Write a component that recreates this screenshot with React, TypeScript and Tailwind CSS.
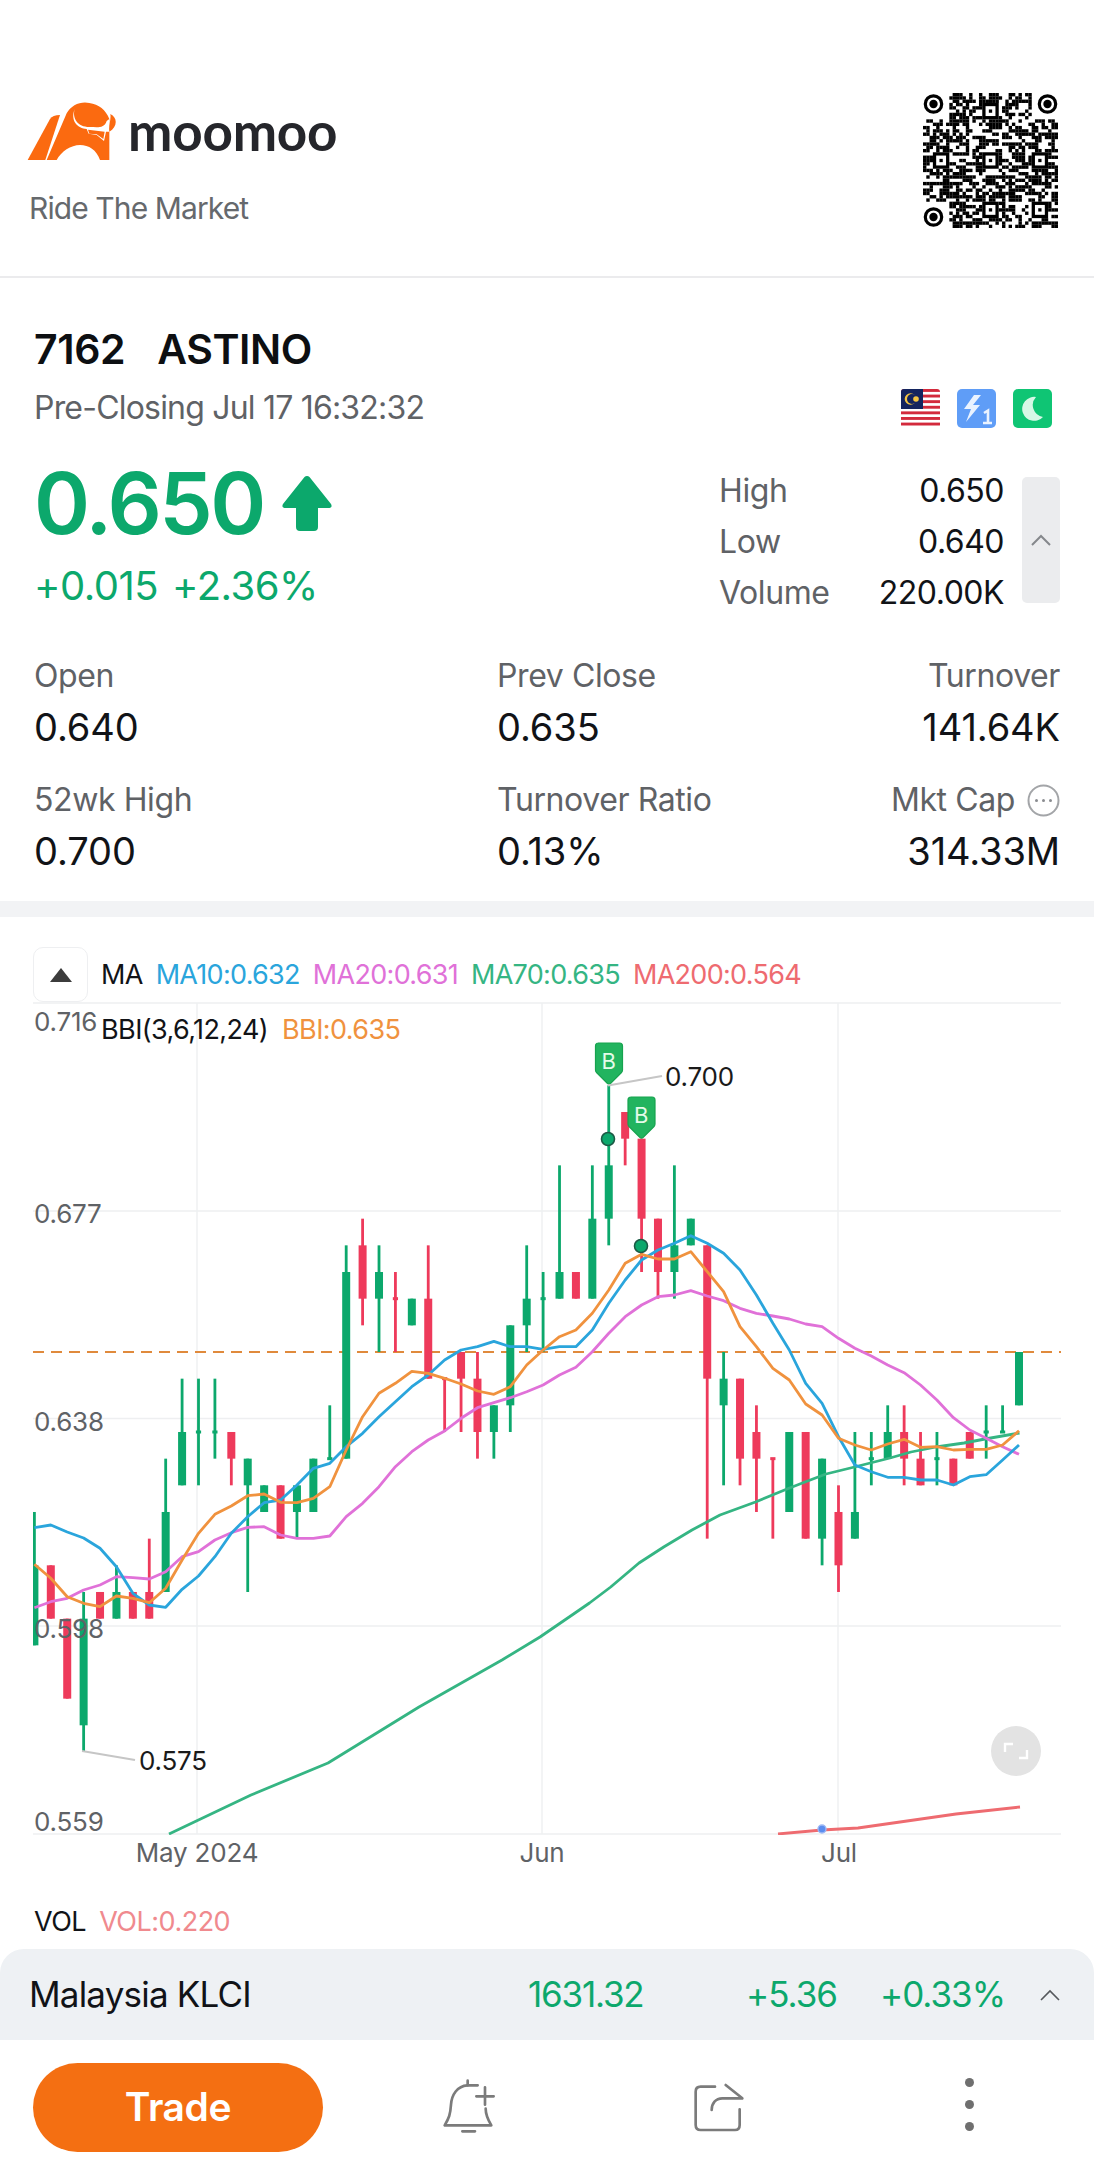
import React from "react";

const GREEN = "#0ca86c";
const RED = "#ee3a5b";
const X = (i: number) => 34.4 + 16.41 * i;
const Y = (p: number) => 1352 + (0.65 - p) * 5333;

// [up?, bodyTop, bodyBottom, wickTop, wickBottom]
const C: [number, number, number, number, number][] = [
  [1,.610,.595,.620,.595],[0,.610,.600,.610,.600],[0,.600,.585,.600,.585],[1,.600,.580,.605,.575],[0,.605,.600,.605,.600],
  [1,.605,.600,.610,.600],[0,.605,.600,.605,.600],[0,.605,.600,.615,.600],[1,.620,.605,.630,.605],[1,.635,.625,.645,.625],
  [1,.635,.635,.645,.625],[1,.635,.635,.645,.630],[0,.635,.630,.635,.625],[1,.630,.625,.630,.605],[1,.625,.620,.625,.620],
  [0,.625,.615,.625,.615],[1,.625,.620,.625,.615],[1,.630,.620,.630,.620],[1,.630,.630,.640,.630],[1,.665,.630,.670,.630],
  [0,.670,.660,.675,.655],[1,.665,.660,.670,.650],[0,.660,.660,.665,.650],[1,.660,.655,.660,.655],[0,.660,.645,.670,.645],
  [0,.645,.645,.645,.635],[0,.650,.645,.650,.635],[0,.645,.635,.650,.630],[1,.640,.635,.640,.630],[1,.655,.640,.655,.635],
  [1,.660,.655,.670,.650],[1,.660,.660,.665,.650],[1,.665,.660,.685,.660],[0,.665,.660,.665,.660],[1,.675,.660,.685,.660],
  [1,.685,.675,.700,.670],[0,.695,.690,.695,.685],[0,.690,.675,.690,.665],[0,.675,.665,.675,.660],[1,.670,.665,.685,.660],
  [1,.675,.670,.675,.670],[0,.670,.645,.670,.615],[1,.645,.640,.650,.625],[0,.645,.630,.645,.625],[0,.635,.630,.640,.620],
  [0,.630,.630,.630,.615],[1,.635,.620,.635,.620],[0,.635,.615,.635,.615],[1,.630,.615,.630,.610],[0,.620,.610,.625,.605],
  [1,.620,.615,.635,.615],[1,.630,.630,.635,.625],[1,.635,.630,.640,.630],[0,.635,.630,.640,.625],[0,.630,.625,.635,.625],
  [1,.630,.630,.635,.625],[0,.630,.625,.630,.625],[0,.635,.630,.635,.630],[1,.635,.635,.640,.630],[1,.635,.635,.640,.635],
  [1,.650,.640,.650,.640],
];

const toPts = (a: number[]) => a.map((z, i) => `${X(i).toFixed(1)},${(1330 + z / 3).toFixed(1)}`).join(" ");

const MA10 = [593,585,606,624,655,710,790,825,832,778,738,680,610,560,518,510,465,415,400,350,310,260,215,170,135,90,60,50,34,50,50,58,50,50,0,-80,-150,-210,-240,-260,-283,-260,-230,-180,-105,-20,60,160,220,320,405,425,442,442,450,450,465,440,434,390,345];
const BBI = [703,745,800,820,830,798,805,818,775,690,610,553,528,497,492,517,518,505,470,360,260,190,160,124,130,145,162,183,193,170,105,60,20,0,-50,-120,-200,-227,-213,-213,-235,-175,-115,-10,50,115,150,222,255,325,345,360,342,328,352,350,360,358,358,345,302];
const MA20 = [833,815,805,780,765,740,743,747,725,680,665,630,608,592,590,615,625,625,618,560,520,470,410,365,330,303,265,233,218,203,185,165,135,112,65,10,-40,-75,-100,-105,-118,-102,-88,-65,-50,-42,-33,-18,-10,25,55,78,105,128,165,210,263,300,325,350,373];
const MA70 = "169,1834 251,1795 328,1763 419,1707 502,1660 540,1637 575,1613 589.5,1603 610.7,1587 639,1563 663.7,1547 692,1530 720,1515 755.5,1502 787,1489 805,1482 826,1474 854.5,1467 890,1458 911,1452 936,1447 964,1443 985,1439 1019.5,1433";
const MA200 = "778,1834 822,1830 858,1828 956,1814 1020,1807";

function Chart() {
  const label = "#5f6266";
  return (
    <svg className="absolute inset-0 w-full h-full" viewBox="0 917 1094 1032" fill="none">
      <defs>
        <clipPath id="plot"><rect x="33" y="1003" width="1028" height="832" /></clipPath>
      </defs>
      {[1003, 1211, 1418.5, 1626, 1834].map((y) => (
        <line key={y} x1="33" x2="1061" y1={y} y2={y} stroke="#eeeff1" strokeWidth="1.6" />
      ))}
      {[197, 542, 838].map((x) => (
        <line key={x} x1={x} x2={x} y1="1003" y2="1834" stroke="#eeeff1" strokeWidth="1.4" />
      ))}
      <line x1="33" x2="1061" y1="1352" y2="1352" stroke="#e08a3c" strokeWidth="2" strokeDasharray="11 7" />
      <g clipPath="url(#plot)">
        {C.map(([up, bt, bb, wt, wb], i) => {
          const col = up ? GREEN : RED;
          const x = X(i);
          const doji = bt === bb;
          return (
            <g key={i} fill={col}>
              <rect x={x - 1.4} y={Y(wt)} width="2.8" height={Y(wb) - Y(wt)} />
              {doji ? (
                <rect x={x - 2.6} y={Y(bt) - 1.5} width="5.2" height="3" />
              ) : (
                <rect x={x - 4} y={Y(bt)} width="8" height={Y(bb) - Y(bt)} />
              )}
            </g>
          );
        })}
        <polyline points={MA200} stroke="#ee6b70" strokeWidth="2.8" strokeLinejoin="round" />
        <polyline points={MA70} stroke="#35b583" strokeWidth="2.8" strokeLinejoin="round" />
        <polyline points={toPts(MA20)} stroke="#e071d8" strokeWidth="2.8" strokeLinejoin="round" />
        <polyline points={toPts(MA10)} stroke="#2aa5dc" strokeWidth="2.8" strokeLinejoin="round" />
        <polyline points={toPts(BBI)} stroke="#f0923e" strokeWidth="2.8" strokeLinejoin="round" />
      </g>
      <circle cx="822" cy="1829" r="4" fill="#5b8def" stroke="#9db8f5" strokeWidth="1.4" />
      {/* markers */}
      <circle cx="608" cy="1139" r="6.5" fill={GREEN} stroke="#1c5a45" strokeWidth="1.6" />
      <circle cx="641" cy="1246" r="6.5" fill={GREEN} stroke="#1c5a45" strokeWidth="1.6" />
      {[[595, 1043], [627.5, 1097]].map(([x, y]) => (
        <g key={x}>
          <path
            d={`M${x + 3} ${y} h21.5 q3 0 3 3 v24 q0 1.5 -1 2.5 l-11 11 q-1.5 1.2 -3 0 l-11 -11 q-1 -1 -1 -2.5 v-24 q0 -3 3 -3z`}
            fill="#22b45f"
            stroke="#17a34f"
            strokeWidth="1.2"
          />
          <text x={x + 13.8} y={y + 25.5} textAnchor="middle" fontSize="22" fill="#e4fbe9" fontFamily="Inter, sans-serif">B</text>
        </g>
      ))}
      <line x1="608" y1="1085.5" x2="662" y2="1076" stroke="#c6c6c6" strokeWidth="2" />
      <text x="665" y="1085.5" fontSize="26" fill="#1a1a1a" fontFamily="Inter, sans-serif" letterSpacing="-0.2">0.700</text>
      <line x1="82" y1="1751" x2="135" y2="1760" stroke="#c6c6c6" strokeWidth="2" />
      <text x="139" y="1769.5" fontSize="26" fill="#1a1a1a" fontFamily="Inter, sans-serif" letterSpacing="-0.2">0.575</text>
      {/* axis labels */}
      {[["0.716", 1031], ["0.677", 1223], ["0.638", 1431], ["0.598", 1638], ["0.559", 1831]].map(([t, y]) => (
        <text key={t} x="34" y={y} fontSize="26" fill={label} fontFamily="Inter, sans-serif" letterSpacing="-0.2">{t}</text>
      ))}
      {[["May 2024", 197], ["Jun", 542], ["Jul", 839]].map(([t, x]) => (
        <text key={t} x={x} y="1862" textAnchor="middle" fontSize="26" fill={label} fontFamily="Inter, sans-serif" letterSpacing="-0.2">{t}</text>
      ))}
      {/* fullscreen */}
      <circle cx="1016" cy="1751" r="25" fill="#e3e3e3" />
      <path d="M1005 1752 v-8 h8 M1027 1750 v8 h-8" stroke="#fff" strokeWidth="2.4" />
    </svg>
  );
}

function Qr() {
  const N = 41;
  const s = 135 / N;
  let seed = 7162;
  const rnd = () => {
    seed = (seed * 1664525 + 1013904223) >>> 0;
    return (seed >>> 16) / 65536;
  };
  const rects: React.ReactNode[] = [];
  const aligns = [[5, 20], [20, 5], [20, 20], [35, 20], [20, 35], [35, 35]];
  const inFinder = (c: number, r: number) => (c < 8 && r < 8) || (c > 32 && r < 8) || (c < 8 && r > 32);
  const inAlign = (c: number, r: number) => aligns.some(([a, b]) => Math.abs(c - a) <= 2 && Math.abs(r - b) <= 2);
  for (let r = 0; r < N; r++) {
    let prev = false;
    for (let c = 0; c < N; c++) {
      const on = rnd() < (prev ? 0.62 : 0.44);
      prev = on;
      if (on && !inFinder(c, r) && !inAlign(c, r)) {
        rects.push(<rect key={`${r}-${c}`} x={c * s} y={r * s} width={s + 0.1} height={s + 0.1} />);
      }
    }
  }
  return (
    <svg className="w-[135px] h-[135px]" viewBox="0 0 135 135" fill="#000">
      {rects}
      {aligns.map(([a, b]) => (
        <g key={`${a}${b}`}>
          <rect x={(a - 2) * s} y={(b - 2) * s} width={5 * s} height={5 * s} />
          <rect x={(a - 1) * s} y={(b - 1) * s} width={3 * s} height={3 * s} fill="#fff" />
          <rect x={a * s} y={b * s} width={s} height={s} />
        </g>
      ))}
      {[[10.5, 11], [124.5, 11], [10.5, 124]].map(([x, y]) => (
        <g key={x * y}>
          <circle cx={x} cy={y} r="8.2" fill="#fff" stroke="#000" strokeWidth="3.2" />
          <circle cx={x} cy={y} r="4.2" />
        </g>
      ))}
    </svg>
  );
}

function Logo() {
  return (
    <svg className="w-[92px] h-[60px]" viewBox="50 55 276 180">
      <path d="M55 235 L122 112 Q130 100 152 100 L108 235 Z" fill="#fb6a10" />
      <path
        d="M112 235 L172 95 C185 70 215 58 240 64 C268 68 290 85 300 112 L300 235 L272 235 C262 205 238 190 212 190 C185 190 155 210 142 235 Z"
        fill="#fb6a10"
      />
      <path
        d="M196 82 C188 110 205 136 240 136 C262 136 285 142 292 118 L300 112 L302 150 L290 150 L284 178 L262 160 L238 156 L232 142 C205 140 182 118 196 82 Z"
        fill="#fff"
      />
      <path d="M236 144 L286 150 L282 172 L262 158 L240 156 Z" fill="#fb6a10" />
      <path d="M303 97 C326 108 324 136 300 150 C297 130 306 115 303 97 Z" fill="#fb6a10" />
    </svg>
  );
}

function Flags() {
  return (
    <div className="flex gap-[17px] mr-[8px]">
      <svg className="w-[39px] h-[39px]" viewBox="0 0 39 39">
        <defs><clipPath id="fl"><rect width="39" height="39" rx="3" /></clipPath></defs>
        <g clipPath="url(#fl)">
          <rect width="39" height="39" fill="#fff" />
          {[0, 5.6, 11.2, 16.8, 22.4, 28, 33.6].map((y) => (
            <rect key={y} y={y} width="39" height="2.9" fill="#d32a3c" />
          ))}
          <rect width="22" height="20" fill="#14245e" />
          <circle cx="9.5" cy="10" r="5.8" fill="#f5c542" />
          <circle cx="11" cy="10" r="5" fill="#14245e" />
          <circle cx="15" cy="10" r="2.8" fill="#f5c542" />
        </g>
      </svg>
      <svg className="w-[39px] h-[39px]" viewBox="0 0 39 39">
        <rect width="39" height="39" rx="5" fill="#5f9df7" />
        <path d="M17 6 L7 20 H14 L9 33 L23 16 H16 L24 6 Z" fill="#eaf3ff" />
        <path d="M27 24 L31 21.5 V34 M26 34 H35" stroke="#eaf3ff" strokeWidth="2.6" fill="none" />
      </svg>
      <svg className="w-[39px] h-[39px]" viewBox="0 0 39 39">
        <rect width="39" height="39" rx="5" fill="#0fc574" />
        <path d="M23 8 A12 12 0 1 0 30 28 A12 12 0 0 1 23 8 Z" fill="#d6f8e6" />
      </svg>
    </div>
  );
}

function Stat({ label, value, right, extra }: { label: string; value: string; right?: boolean; extra?: React.ReactNode }) {
  return (
    <div className={`flex flex-col ${right ? "items-end" : "items-start"}`}>
      <div className="h-[50px] flex items-center gap-[12px] text-[32px] text-[#5f6266] tracking-[-0.4px]">
        {label}
        {extra}
      </div>
      <div className="h-[52px] flex items-center text-[38px] text-[#111317] tracking-[-0.1px]">{value}</div>
    </div>
  );
}

export default function App() {
  return (
    <div className="relative w-[1094px] h-[2176px] overflow-hidden bg-white font-['Inter',sans-serif]">
      {/* brand header */}
      <header className="h-[278px] border-b-2 border-[#ebebed] flex justify-between pl-[26px] pr-[36px]">
        <div className="pt-[100px]">
          <div className="flex items-center h-[60px]">
            <Logo />
            <span className="ml-[10px] text-[53px] leading-none font-bold text-[#25262b] font-['Lato',sans-serif] tracking-[-0.2px]">moomoo</span>
          </div>
          <div className="mt-[32px] ml-[3px] text-[30px] leading-[32px] text-[#66696d] tracking-[-0.9px]">Ride The Market</div>
        </div>
        <div className="pt-[93px]"><Qr /></div>
      </header>

      {/* quote */}
      <section className="h-[623px] px-[34px] pt-[47px]">
        <div className="h-[50px] flex items-center text-[41px] font-semibold text-[#0d0f12] tracking-[-0.4px] gap-[32px]">
          <span>7162</span><span>ASTINO</span>
        </div>
        <div className="mt-[13px] h-[40px] flex items-center justify-between">
          <span className="text-[32px] text-[#5f6266] tracking-[-0.8px]">Pre-Closing Jul 17 16:32:32</span>
          <Flags />
        </div>
        <div className="mt-[37px] flex justify-between">
          <div className="pt-[3px] text-[#0ca86c]">
            <div className="h-[70px] flex items-center">
              <span className="text-[85px] leading-none font-semibold tracking-[-2.5px]">0.650</span>
              <svg className="ml-[18px] w-[50px] h-[55px]" viewBox="0 0 50 55" fill="#0ca86c">
                <path d="M25 0 Q26.5 0 27.5 1 L49 28 Q51 32 46 32 H36 V51 Q36 55 32 55 H18 Q14 55 14 51 V32 H4 Q-1 32 1 28 L22.5 1 Q23.5 0 25 0 Z" />
              </svg>
            </div>
            <div className="mt-[26px] h-[44px] flex items-center text-[40px] tracking-[-0.5px] gap-[14px]">
              <span>+0.015</span><span>+2.36%</span>
            </div>
          </div>
          <div className="flex">
            <div className="w-[285px]">
              {[["High", "0.650"], ["Low", "0.640"], ["Volume", "220.00K"]].map(([a, b]) => (
                <div key={a} className="h-[51px] flex items-center justify-between">
                  <span className="text-[32px] text-[#5f6266] tracking-[-0.4px]">{a}</span>
                  <span className="text-[32px] text-[#111317] tracking-[-0.5px]">{b}</span>
                </div>
              ))}
            </div>
            <div className="ml-[18px] mt-[12px] w-[38px] h-[126px] rounded-[5px] bg-[#ebecee] flex items-center justify-center">
              <svg className="w-[20px] h-[12px]" viewBox="0 0 20 12" fill="none" stroke="#85888c" strokeWidth="2"><path d="M1 11 L10 2 L19 11" /></svg>
            </div>
          </div>
        </div>
        <div className="mt-[33px] grid grid-cols-[463px_1fr_auto] gap-y-[22px]">
          <Stat label="Open" value="0.640" />
          <Stat label="Prev Close" value="0.635" />
          <Stat label="Turnover" value="141.64K" right />
          <Stat label="52wk High" value="0.700" />
          <Stat label="Turnover Ratio" value="0.13%" />
          <Stat
            label="Mkt Cap"
            value="314.33M"
            right
            extra={
              <svg className="w-[33px] h-[33px]" viewBox="0 0 33 33" fill="none">
                <circle cx="16.5" cy="16.5" r="15" stroke="#a3a5a8" strokeWidth="2" />
                <circle cx="9.5" cy="16.5" r="1.5" fill="#8a8c90" /><circle cx="16.5" cy="16.5" r="1.5" fill="#8a8c90" /><circle cx="23.5" cy="16.5" r="1.5" fill="#8a8c90" />
              </svg>
            }
          />
        </div>
      </section>

      <div className="h-[16px] bg-[#f2f3f5]" />

      {/* chart */}
      <section className="relative h-[1032px]">
        <Chart />
        <div className="relative flex items-start pt-[30px] pl-[33px]">
          <div className="w-[55px] h-[55px] rounded-[10px] border border-[#eeeff1] bg-white flex items-center justify-center">
            <svg className="w-[22px] h-[14px]" viewBox="0 0 22 14" fill="#3c3c3c"><path d="M11 0 L22 14 H0 Z" /></svg>
          </div>
          <div className="ml-[13px] h-[56px] flex items-center text-[27px] tracking-[-0.7px] gap-[13px]">
            <span className="text-[#111317]">MA</span>
            <span className="text-[#2aa5dc]">MA10:0.632</span>
            <span className="text-[#e071d8]">MA20:0.631</span>
            <span className="text-[#35b583]">MA70:0.635</span>
            <span className="text-[#ee6b70]">MA200:0.564</span>
          </div>
        </div>
        <div className="relative mt-[9px] ml-[101px] h-[36px] flex items-center text-[27px] tracking-[-0.6px] gap-[14px]">
          <span className="text-[#111317]">BBI(3,6,12,24)</span>
          <span className="text-[#f0923e]">BBI:0.635</span>
        </div>
        <div className="absolute left-[34px] top-[987px] h-[36px] flex items-center text-[27px] tracking-[-0.5px] gap-[13px]">
          <span className="text-[#111317]">VOL</span>
          <span className="text-[#f08a8e]">VOL:0.220</span>
        </div>
      </section>

      {/* index bar */}
      <div className="h-[91px] rounded-t-[24px] bg-[#eef1f4] flex items-center pl-[29px]">
        <span className="w-[499px] text-[35px] text-[#111317] tracking-[-0.8px]">Malaysia KLCI</span>
        <span className="w-[218px] text-[35px] text-[#0ca86c] tracking-[-1.2px]">1631.32</span>
        <span className="w-[134px] text-[35px] text-[#0ca86c] tracking-[-1px]">+5.36</span>
        <span className="w-[125px] text-[35px] text-[#0ca86c] tracking-[-1px]">+0.33%</span>
        <svg className="ml-[35px] w-[20px] h-[12px]" viewBox="0 0 20 12" fill="none" stroke="#55585c" strokeWidth="1.6"><path d="M1 11 L10 2 L19 11" /></svg>
      </div>

      {/* action bar */}
      <div className="h-[136px] flex items-center pl-[33px] pb-[1px]">
        <button className="w-[290px] h-[89px] rounded-full bg-[#f46f12] text-white text-[39px] font-semibold tracking-[-0.4px]">Trade</button>
        <div className="ml-[21px] flex-1 grid grid-cols-3 justify-items-center">
          <svg className="w-[60px] h-[60px]" viewBox="30 30 180 180" fill="none" stroke="#7b7b7b" strokeWidth="8" strokeLinecap="round" strokeLinejoin="round">
            <path d="M146 52 H115 C85 54 68 80 66 110 C64 140 60 150 47 172 H187 C175 152 170 140 170 122" />
            <path d="M116 38 V52 M142 85 H194 M168 58 V110 M100 190 H138" />
          </svg>
          <svg className="w-[60px] h-[60px]" viewBox="780 24 180 180" fill="none" stroke="#7b7b7b" strokeWidth="8" strokeLinecap="round" strokeLinejoin="round">
            <path d="M858 50 H815 Q800 50 800 65 V165 Q800 180 815 180 H918 Q932 180 932 165 V118" />
            <path d="M890 45 L940 85 H880 C860 85 848 100 848 120" />
          </svg>
          <div className="flex flex-col gap-[13px]">
            <span className="w-[9px] h-[9px] rounded-full bg-[#6f6f6f]" />
            <span className="w-[9px] h-[9px] rounded-full bg-[#6f6f6f]" />
            <span className="w-[9px] h-[9px] rounded-full bg-[#6f6f6f]" />
          </div>
        </div>
      </div>
    </div>
  );
}
